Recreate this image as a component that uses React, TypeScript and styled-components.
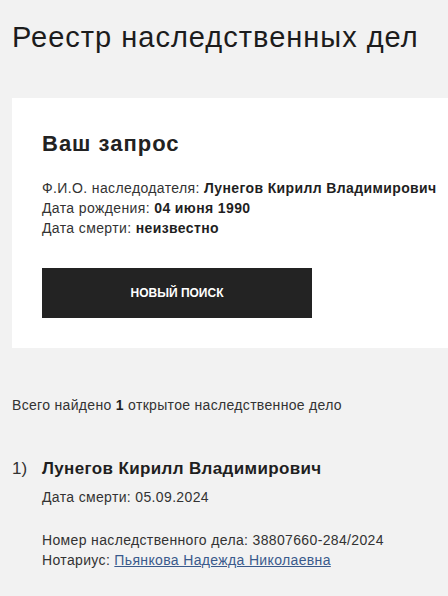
import React from "react";
import styled, { createGlobalStyle } from "styled-components";

const Global = createGlobalStyle`
  html, body { margin: 0; padding: 0; background: #f2f2f2; }
  body { font-family: "Liberation Sans", Arial, sans-serif; color: #222; }
`;

const Page = styled.div`
  padding: 0 0 0 12px;
  overflow: hidden;
`;

const Title = styled.h1`
  margin: 0;
  padding-top: 20px;
  font-size: 29px;
  line-height: 34px;
  letter-spacing: 1px;
  font-weight: 400;
  color: #1c1c1c;
  height: 78px;
  white-space: nowrap;
`;

const Card = styled.section`
  background: #fff;
  padding: 32px 30px 30px 30px;
  height: 250px;
  box-sizing: border-box;
`;

const CardTitle = styled.h2`
  margin: 0;
  font-size: 22px;
  line-height: 28px;
  letter-spacing: 1px;
  font-weight: 700;
  color: #222;
`;

const Info = styled.div`
  margin-top: 20px;
  font-size: 14px;
  line-height: 20px;
  letter-spacing: 0.38px;
  color: #333;
  white-space: nowrap;
`;

const Line = styled.div``;

const B = styled.b`
  font-weight: 700;
  color: #1f1f1f;
`;

const Button = styled.button`
  margin-top: 30px;
  width: 270px;
  height: 50px;
  border: 0;
  background: #232323;
  color: #fff;
  font-family: "Liberation Sans", Arial, sans-serif;
  font-size: 12px;
  font-weight: 700;
  text-transform: uppercase;
  display: flex;
  align-items: center;
  justify-content: center;
`;

const Summary = styled.p`
  margin: 47px 0 0;
  font-size: 14px;
  line-height: 20px;
  letter-spacing: 0.32px;
  color: #333;
`;

const Item = styled.div`
  display: grid;
  grid-template-columns: 30px 1fr;
  margin-top: 42px;
`;

const Num = styled.div`
  font-size: 17px;
  line-height: 24px;
  color: #333;
`;

const Name = styled.div`
  font-size: 17px;
  line-height: 24px;
  letter-spacing: 0.36px;
  font-weight: 700;
  color: #1f1f1f;
`;

const Meta = styled.div<{ $gap?: number }>`
  margin-top: ${(p) => p.$gap ?? 0}px;
  font-size: 14px;
  line-height: 20px;
  letter-spacing: 0.35px;
  color: #333;
`;

const Link = styled.a`
  color: #3a5a8c;
  text-decoration: underline;
`;

export default function App() {
  return (
    <>
      <Global />
      <Page>
        <Title>Реестр наследственных дел</Title>
        <Card>
          <CardTitle>Ваш запрос</CardTitle>
          <Info>
            <Line>
              Ф.И.О. наследодателя: <B>Лунегов Кирилл Владимирович</B>
            </Line>
            <Line>
              Дата рождения: <B>04 июня 1990</B>
            </Line>
            <Line>
              Дата смерти: <B>неизвестно</B>
            </Line>
          </Info>
          <Button>Новый поиск</Button>
        </Card>
        <Summary>
          Всего найдено <B>1</B> открытое наследственное дело
        </Summary>
        <Item>
          <Num>1)</Num>
          <div>
            <Name>Лунегов Кирилл Владимирович</Name>
            <Meta $gap={6}>Дата смерти: 05.09.2024</Meta>
            <Meta $gap={23}>Номер наследственного дела: 38807660-284/2024</Meta>
            <Meta>
              Нотариус: <Link href="#">Пьянкова Надежда Николаевна</Link>
            </Meta>
          </div>
        </Item>
      </Page>
    </>
  );
}
